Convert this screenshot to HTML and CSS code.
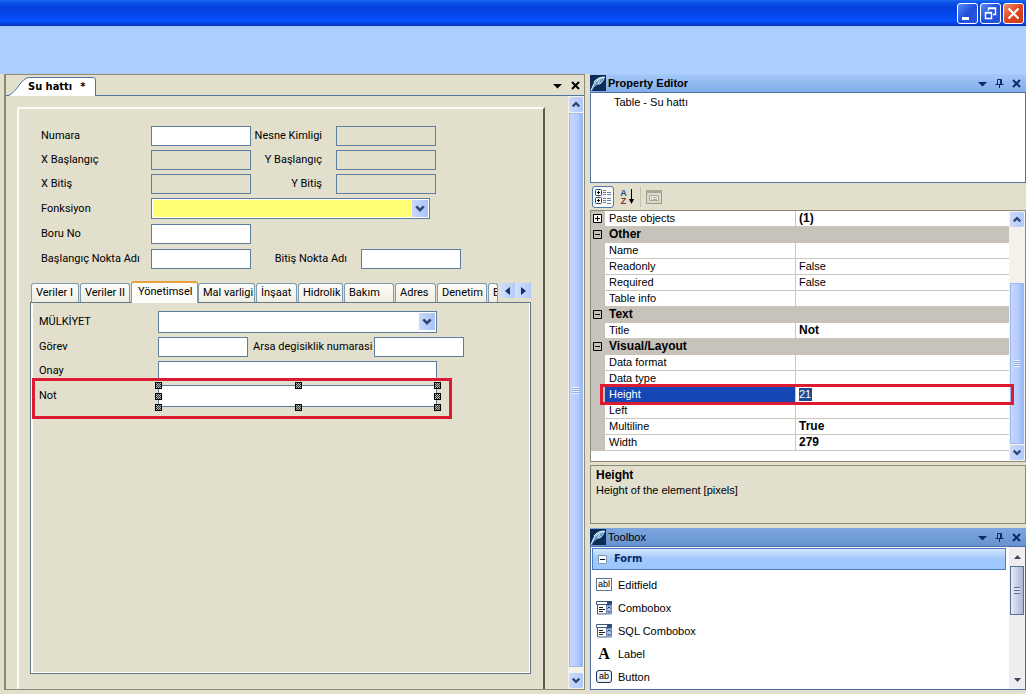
FILE: index.html
```html
<!DOCTYPE html>
<html lang="tr">
<head>
<meta charset="utf-8">
<title>Su hattı</title>
<link rel="stylesheet" href="styles.css">
</head>
<body>
<svg class="defs" aria-hidden="true">
  <symbol id="chev-down" viewBox="0 0 15 15"><path d="M4 5.5 7.500 9 11 5.500" fill="none" stroke="#2f4676" stroke-width="2.400"/></symbol>
  <symbol id="chev-up" viewBox="0 0 15 15"><path d="M4 9.500 7.500 6 11 9.500" fill="none" stroke="#2f4676" stroke-width="2.400"/></symbol>
  <symbol id="drop" viewBox="0 0 9 9"><path d="M0 3h9L4.500 7.500z" fill="currentColor"/></symbol>
  <symbol id="cross" viewBox="0 0 9 9"><path d="M1 1 8 8M8 1 1 8" stroke="currentColor" stroke-width="2" fill="none"/></symbol>
  <symbol id="pin" viewBox="0 0 9 9"><path d="M2.500 5V.5h4V5M5.500 .5V5M.5 5.500h8M4.500 5.500V9" stroke="currentColor" fill="none"/></symbol>
  <symbol id="logo" viewBox="0 0 16 16"><path fill="#0b2a55" d="M0 0h16v16H0z"/><path d="M1 15C3 11 3 6 8 3.500 11 2 13 2 15 1.500 13 4 12 8 8.500 9.500 6 10.500 3.500 12 2 16z" fill="#5f9cc6"/><path d="M1 15.500C3 11 4 8 6 6.500 9 4 12 3 14.500 2 13.500 5 12 8 9.500 9 7.500 9.500 8 7 10 5.500M4 7C6 4 9 2.500 13 2" stroke="#eef8ff" fill="none"/></symbol>
  <symbol id="combo" viewBox="0 0 16 14"><path d="M.5 .5h15v3H.5zM1.500 3.500h9v9.500h-9z" fill="#fff" stroke="#3d5c85"/><path d="M10.500 4.500h5v8.500h-5z" fill="#a9c3ea" stroke="#6884b0"/><path d="M11 0h5v3.500h-5z" fill="#2e4c78"/><path d="M3 6.500h4M3 8.500h6M3 10.500h4" stroke="#222"/><path d="M11.500 7.500 13 6l1.500 1.500M11.500 10 13 11.500 14.500 10" stroke="#12305c" fill="none"/></symbol>
  <symbol id="plus" viewBox="0 0 9 9"><path d="M.5 .5h8v8h-8z" fill="#fff" stroke="#000"/><path d="M2 4.500h5M4.500 2v5" stroke="#000"/></symbol>
  <symbol id="minus" viewBox="0 0 9 9"><path d="M.5 .5h8v8h-8z" fill="none" stroke="#000"/><path d="M2 4.500h5" stroke="#000"/></symbol>
</svg>

<header class="titlebar">
  <button class="win" aria-label="Minimize"><svg viewBox="0 0 19 19"><path d="M4 13h7v3H4z" fill="#fff"/></svg></button>
  <button class="win" aria-label="Restore"><svg viewBox="0 0 19 19"><path d="M7.500 6.500V4h7v6.500H12M7.500 4.500h7" fill="none" stroke="#fff" stroke-width="1.500"/><path d="M4.500 8.500h6v6h-6zM4.500 9h6" fill="none" stroke="#fff" stroke-width="1.500"/></svg></button>
  <button class="win win-close" aria-label="Close"><svg viewBox="0 0 19 19"><path d="M4.500 4.500l10 10M14.500 4.500l-10 10" stroke="#fff" stroke-width="2.200"/></svg></button>
</header>
<div class="ribbon"></div>

<main class="workspace">
  <section class="designer">
    <div class="doc-strip">
      <div class="doc-tab">
        <svg class="doc-tab-shape" viewBox="0 0 88 19" preserveAspectRatio="none"><path d="M0 19C10 14 13 1 21 .5H85.500Q87.500 .5 87.500 3V19" fill="#fff" stroke="#5076a0"/></svg>
        <span>Su hattı</span><span>*</span>
      </div>
      <div class="strip-actions">
        <button class="plain" aria-label="Documents"><svg class="i9"><use href="#drop"/></svg></button>
        <button class="plain" aria-label="Close document"><svg class="i9"><use href="#cross"/></svg></button>
      </div>
    </div>
    <div class="canvas">
      <form class="sheet">
        <div class="fields">
          <div class="row"><label class="l1" for="numara">Numara</label><input class="box" id="numara"><label class="l2" for="nesne">Nesne Kimligi</label><input class="box off" id="nesne" readonly></div>
          <div class="row"><label class="l1" for="xb">X Başlangıç</label><input class="box off" id="xb" readonly><label class="l2" for="yb">Y Başlangıç</label><input class="box off" id="yb" readonly></div>
          <div class="row"><label class="l1" for="xe">X Bitiş</label><input class="box off" id="xe" readonly><label class="l2" for="ye">Y Bitiş</label><input class="box off" id="ye" readonly></div>
          <div class="row"><label class="l1" for="fonk">Fonksiyon</label><span class="combo"><select class="yellow" id="fonk"><option></option></select><svg class="arrow"><use href="#chev-down"/></svg></span></div>
          <div class="row row-gap"><label class="l1" for="boru">Boru No</label><input class="box" id="boru"></div>
          <div class="row row-gap"><label class="l1" for="bna">Başlangıç Nokta Adı</label><input class="box" id="bna"><label class="l2 wide" for="btna">Bitiş Nokta Adı</label><input class="box" id="btna"></div>
        </div>
        <div class="tabs-wrap">
          <div class="tabs" role="tablist">
            <button type="button" role="tab">Veriler I</button><button type="button" role="tab">Veriler II</button><button type="button" role="tab" class="active" aria-selected="true">Yönetimsel</button><button type="button" role="tab">Mal varligi</button><button type="button" role="tab">İnşaat</button><button type="button" role="tab">Hidrolik</button><button type="button" role="tab">Bakım</button><button type="button" role="tab">Adres</button><button type="button" role="tab">Denetim</button><button type="button" role="tab">E</button>
            <div class="spin"><button type="button" aria-label="Previous tabs"><svg viewBox="0 0 5 8"><path d="M5 0v8L0 4z" fill="#12306e"/></svg></button><button type="button" aria-label="Next tabs"><svg viewBox="0 0 5 8"><path d="M0 0v8l5-4z" fill="#12306e"/></svg></button></div>
          </div>
          <div class="page">
            <div class="row"><label class="l3" for="mulk">MÜLKİYET</label><span class="combo"><select id="mulk"><option></option></select><svg class="arrow"><use href="#chev-down"/></svg></span></div>
            <div class="row"><label class="l3" for="gorev">Görev</label><input class="box narrow" id="gorev"><label class="l4" for="arsa">Arsa degisiklik numarasi</label><input class="box narrow" id="arsa"></div>
            <div class="row"><label class="l3" for="onay">Onay</label><input class="box long" id="onay"></div>
            <div class="row marked"><label class="l3" for="not">Not</label><span class="selected"><input class="box long" id="not"><i class="h nw"></i><i class="h n"></i><i class="h ne"></i><i class="h w"></i><i class="h e"></i><i class="h sw"></i><i class="h s"></i><i class="h se"></i></span></div>
          </div>
        </div>
      </form>
      <div class="scroll">
        <button class="sb" aria-label="Scroll up"><svg><use href="#chev-up"/></svg></button>
        <div class="thumb"><i class="grip"></i></div>
        <button class="sb" aria-label="Scroll down"><svg><use href="#chev-down"/></svg></button>
      </div>
    </div>
  </section>

  <aside class="side">
    <div class="panel-head bold">
      <svg class="logo"><use href="#logo"/></svg><h2>Property Editor</h2>
      <button class="plain" aria-label="Menu"><svg class="i9"><use href="#drop"/></svg></button>
      <button class="plain" aria-label="Pin"><svg class="i9"><use href="#pin"/></svg></button>
      <button class="plain" aria-label="Close"><svg class="i9"><use href="#cross"/></svg></button>
    </div>
    <div class="tree">Table - Su hattı</div>
    <div class="toolbar">
      <button class="tool pressed" aria-label="Categorized"><svg viewBox="0 0 16 16"><g fill="#fff" stroke="#1c3f7c"><rect x=".5" y=".5" width="6" height="6" rx="1"/><rect x=".5" y="8.500" width="6" height="6" rx="1"/></g><path d="M2 3.500h3M3.500 2v3M2 11.500h3M3.500 10v3" stroke="#000"/><path d="M8 1.500h3M8 3.500h3M8 5.500h3M8 9.500h3M8 11.500h3M8 13.500h3M12 3.500h4M12 5.500h4M12 9.500h4M12 11.500h4M12 14.500h4" stroke="#6b7aa8"/></svg></button>
      <button class="tool" aria-label="Alphabetical"><span class="az"><b>A</b><b>Z</b></span><svg class="az-arrow" viewBox="0 0 5 15"><path d="M2.500 0v12" stroke="#000"/><path d="M0 10h5L2.500 15z"/></svg></button>
      <i class="sep"></i>
      <button class="tool" aria-label="Property pages" disabled><svg viewBox="0 0 16 16"><path d="M.5 1.500h15v13H.5z" fill="#dedacb" stroke="#9b988b"/><path d="M0 1h16v3H0z" fill="#aaa799"/><path d="M3.500 6.500h9v5h-9z" fill="#f1efe5" stroke="#aaa799"/><path d="M5 8.500h1M7 8.500h4M5 10.500h1M7 10.500h4" stroke="#aaa799"/></svg></button>
    </div>
    <div class="grid-box">
      <div class="grid-view">
        <table class="props">
          <colgroup><col class="c0"><col class="c1"><col></colgroup>
          <tbody>
          <tr><th><svg class="i9"><use href="#plus"/></svg></th><td>Paste objects</td><td><b>(1)</b></td></tr>
          <tr class="cat"><th><svg class="i9"><use href="#minus"/></svg></th><td colspan="2">Other</td></tr>
          <tr><th></th><td>Name</td><td></td></tr>
          <tr><th></th><td>Readonly</td><td>False</td></tr>
          <tr><th></th><td>Required</td><td>False</td></tr>
          <tr><th></th><td>Table info</td><td></td></tr>
          <tr class="cat"><th><svg class="i9"><use href="#minus"/></svg></th><td colspan="2">Text</td></tr>
          <tr><th></th><td>Title</td><td><b>Not</b></td></tr>
          <tr class="cat"><th><svg class="i9"><use href="#minus"/></svg></th><td colspan="2">Visual/Layout</td></tr>
          <tr><th></th><td>Data format</td><td></td></tr>
          <tr><th></th><td>Data type</td><td></td></tr>
          <tr class="current"><th></th><td><label for="height">Height</label></td><td><input class="value" id="height" value="21"></td></tr>
          <tr><th></th><td>Left</td><td></td></tr>
          <tr><th></th><td>Multiline</td><td><b>True</b></td></tr>
          <tr><th></th><td>Width</td><td><b>279</b></td></tr>
          </tbody>
        </table>
      </div>
      <div class="scroll">
        <button class="sb" aria-label="Scroll up"><svg><use href="#chev-up"/></svg></button>
        <div class="thumb low"><i class="grip"></i></div>
        <button class="sb" aria-label="Scroll down"><svg><use href="#chev-down"/></svg></button>
      </div>
    </div>
    <div class="help"><b>Height</b><p>Height of the element [pixels]</p></div>
    <div class="panel-head dim">
      <svg class="logo"><use href="#logo"/></svg><h2>Toolbox</h2>
      <button class="plain" aria-label="Menu"><svg class="i9"><use href="#drop"/></svg></button>
      <button class="plain" aria-label="Pin"><svg class="i9"><use href="#pin"/></svg></button>
      <button class="plain" aria-label="Close"><svg class="i9"><use href="#cross"/></svg></button>
    </div>
    <div class="toolbox">
      <div class="tool-list">
        <button class="group"><svg class="i9" viewBox="0 0 9 9"><path d="M.5 .5h8v8h-8z" fill="#fff" stroke="#7e97bd"/><path d="M2 4.500h5" stroke="#000"/></svg>Form</button>
        <button class="item"><span class="ab">abl</span>Editfield</button>
        <button class="item"><svg><use href="#combo"/></svg>Combobox</button>
        <button class="item"><svg><use href="#combo"/></svg>SQL Combobox</button>
        <button class="item"><span class="big-a">A</span>Label</button>
        <button class="item"><span class="ab round">ab</span>Button</button>
      </div>
      <div class="scroll flat">
        <button class="sb" aria-label="Scroll up"><svg viewBox="0 0 7 4"><path d="M0 4h7L3.500 0z" fill="#3b4660"/></svg></button>
        <div class="thumb"><i class="grip"></i></div>
        <button class="sb" aria-label="Scroll down"><svg viewBox="0 0 7 4"><path d="M0 0h7L3.500 4z" fill="#3b4660"/></svg></button>
      </div>
    </div>
  </aside>
</main>
</body>
</html>
```

FILE: styles.css
```css
*, *::after { box-sizing: border-box; }
body {
  margin: 0;
  min-height: 100vh;
  display: flex;
  flex-direction: column;
  background: #e2dfcd;
  color: #000;
  font: 11px/14px Roboto, "Noto Sans", sans-serif;
}
button, input, select { font: inherit; color: inherit; margin: 0; padding: 0; border-radius: 0; outline: none; }
svg { display: block; }
.defs { position: absolute; width: 0; height: 0; }
.i9 { width: 9px; height: 9px; }
.plain { border: 0; background: none; }

.titlebar {
  height: 26px;
  display: flex;
  justify-content: flex-end;
  align-items: center;
  gap: 2px;
  padding-right: 2px;
  background: linear-gradient(#1a6cf6 0, #0a50e6 3px, #0340dc 8px, #0448ee 16px, #0552fb 21px, #0440dc 24px, #0a2fae 26px);
}
.win {
  width: 21px;
  height: 21px;
  border: 1px solid #fff;
  border-radius: 3px;
  background: linear-gradient(135deg, #5b8cf5, #1f4fdc 50%, #2a56d8);
}
.win svg { width: 19px; height: 19px; }
.win-close { background: linear-gradient(135deg, #f09070, #df4520 50%, #c83c14); }
.ribbon { height: 48px; background: linear-gradient(#a6c8f8 0, #adcfff 3px); }

.workspace {
  flex: 1;
  display: grid;
  grid-template-columns: minmax(0, 581fr) minmax(0, 436fr);
  gap: 5px;
  padding: 0 0 4px 4px;
}

/* form designer */
.designer {
  display: flex;
  flex-direction: column;
  border: 1px solid #8d8a78;
  border-left-width: 2px;
}
.doc-strip {
  height: 21px;
  display: flex;
  align-items: flex-end;
  justify-content: space-between;
  border-bottom: 1px solid #5076a0;
}
.doc-tab {
  position: relative;
  width: 88px;
  height: 19px;
  margin: 0 0 -1px 2px;
  padding-left: 20px;
  display: flex;
  align-items: center;
  gap: 8px;
  font: bold 11px/14px "DejaVu Sans Condensed", "Noto Sans", sans-serif;
}
.doc-tab-shape { position: absolute; inset: 0; width: 100%; height: 100%; }
.doc-tab span { position: relative; }
.strip-actions { display: flex; gap: 9px; padding: 0 4px 5px 0; }
.canvas { flex: 1; display: flex; justify-content: space-between; }
.sheet {
  flex: 1;
  display: flex;
  flex-direction: column;
  margin: 11px 23px 0 11px;
  padding: 17px 12px 15px 11px;
  border-left: 2px solid #fbfaf3;
  border-top: 2px solid #fbfaf3;
  border-right: 2px solid #5d5b4e;
}
.row { display: flex; align-items: center; }
.fields { display: flex; flex-direction: column; gap: 4px; padding-left: 11px; }
.row-gap { padding-top: 1px; }
.l1 { width: 110px; }
.l2 { width: 71px; margin-right: 14px; text-align: right; }
.l2.wide { width: 96px; }
.box { width: 100px; height: 20px; border: 1px solid #5f7d9c; background: #fff; }
.box.off { background: #e2dfcd; }
.narrow { width: 90px; }
.long { width: 279px; }
.combo { position: relative; width: 279px; height: 21px; }
.combo select {
  width: 100%;
  height: 100%;
  appearance: none;
  border: 1px solid #5f7d9c;
  background: #fff;
}
.combo .yellow { background: #ffff73; box-shadow: inset 0 0 0 1px #fff; }
.arrow {
  position: absolute;
  top: 2px;
  right: 2px;
  width: 16px;
  height: 17px;
  background: linear-gradient(90deg, #c8d8fb, #a9c3f5);
  box-shadow: 0 0 0 1px #fff;
  pointer-events: none;
}

.tabs-wrap { flex: 1; display: flex; flex-direction: column; padding-top: 12px; }
.tabs {
  height: 21px;
  display: grid;
  grid-template-columns: 49px 51px 67px 58px 42px 46px 51px 42px 51px 11px 32px;
  align-items: end;
  padding-left: 1px;
}
.tabs > button {
  height: 19px;
  margin-right: 1px;
  border: 1px solid #7f9bb0;
  border-bottom: 0;
  border-radius: 3px 3px 0 0;
  background: linear-gradient(#fdfdfa, #efede2);
  text-align: left;
  padding-left: 4px;
  overflow: hidden;
  white-space: nowrap;
}
.tabs > .active {
  height: 22px;
  margin: 0 0 -1px;
  padding: 0 0 2px 6px;
  border-top: 2px solid #e8a13a;
  background: #fcfcfa;
  z-index: 1;
}
.spin { display: flex; align-self: start; padding-top: 2px; }
.spin button { width: 16px; height: 15px; border: 0; background: linear-gradient(90deg, #d4e0fc, #b4cbf8); display: grid; place-items: center; }
.spin svg { width: 5px; height: 8px; }
.page {
  flex: 1;
  padding: 8px 0 0 6px;
  border: 1px solid #64788a;
  box-shadow: inset 2px 0 #fdfdf8, inset -1px -1px #fff;
  display: flex;
  flex-direction: column;
  gap: 4px;
}
.page .combo { height: 22px; }
.l3 { width: 121px; padding-left: 2px; }
.l4 { width: 126px; padding-left: 5px; white-space: nowrap; }
.marked { position: relative; }
.marked::after {
  content: "";
  position: absolute;
  inset: -7px auto -12px -5px;
  width: 420px;
  border: 3px solid #dc1a32;
  pointer-events: none;
}
.selected { position: relative; z-index: 1; }
.selected .box { display: block; height: 22px; }
.h {
  position: absolute;
  width: 7px;
  height: 7px;
  margin: -3px;
  border: 1px solid #000;
  background: repeating-conic-gradient(#333 0 25%, #bbb 0 50%) 0 0 / 2px 2px;
}
.nw, .n, .ne { top: 0; }
.w, .e { top: 50%; }
.sw, .s, .se { top: 100%; }
.nw, .w, .sw { left: 0; }
.n, .s { left: 50%; }
.ne, .e, .se { left: 100%; }

/* scroll bars */
.scroll { width: 16px; display: flex; flex-direction: column; gap: 1px; padding: 1px; background: #f4f2ea; }
.sb { height: 15px; border: 0; border-radius: 2px; background: linear-gradient(90deg, #cbdafc, #b0c8f8); display: grid; place-items: center; }
.sb svg { width: 14px; height: 15px; }
.thumb {
  flex: 1;
  display: grid;
  place-items: center;
  border: 1px solid #9db9ee;
  background: linear-gradient(90deg, #c6d6fd, #b5ccff 60%, #98b8f4);
}
.thumb.low { margin-top: 55px; }
.grip { width: 6px; height: 7px; background: repeating-linear-gradient(#eef4ff 0 1px, #8ca8dc 1px 2px); }
.canvas .scroll { margin-right: 1px; }
.canvas .sb:last-child { margin-top: 5px; }

/* right column */
.side { display: flex; flex-direction: column; font-family: "Liberation Sans", Arial, sans-serif; }
.panel-head {
  height: 18px;
  display: flex;
  align-items: center;
  gap: 8px;
  padding-right: 5px;
  color: #0c2b6b;
  background: linear-gradient(#a5c8f8, #7facea);
}
.panel-head h2 { flex: 1; margin: 0 0 0 -6px; font: inherit; color: #000; }
.panel-head.bold h2 { font-weight: bold; }
.panel-head.dim { margin-top: 4px; background: linear-gradient(#7ba6e0, #6793d0); }
.logo { width: 16px; height: 16px; }
.tree { height: 91px; padding: 2px 0 0 23px; border: 1px solid #54759f; background: #fff; }
.toolbar { height: 27px; display: flex; align-items: center; gap: 2px; padding-left: 2px; }
.tool { width: 22px; height: 22px; border: 1px solid transparent; border-radius: 3px; background: none; display: flex; align-items: center; justify-content: center; gap: 2px; }
.tool svg { width: 16px; height: 16px; }
.pressed { border-color: #5078a8; background: #fafaf6; }
.az { display: flex; flex-direction: column; font: bold 9px/8px "Liberation Sans", sans-serif; color: #1d4a96; }
.az b + b { color: #963018; }
.tool .az-arrow { width: 5px; height: 15px; }
.sep { width: 1px; height: 20px; background: #c6c2ae; }
.grid-box { height: 252px; display: flex; border: 1px solid #8d8a78; background: #fff; }
.grid-view { flex: 1; }
.props { width: 100%; border-collapse: separate; border-spacing: 0; table-layout: fixed; }
.c0 { width: 14px; }
.c1 { width: 191px; }
.props tr { height: 16px; position: relative; }
.props th { padding: 0 0 1px 2px; background: #c8c3ba; }
.props td { padding: 0 0 0 4px; line-height: 15px; border-bottom: 1px solid #cbc8b9; border-right: 1px solid #cbc8b9; }
.props td:last-child { border-right: 0; padding-left: 3px; }
.props .cat td { background: #c8c3ba; border-color: #c8c3ba; padding-left: 4px; font-weight: bold; font-size: 12px; }
.props b { font-size: 12px; }
.current td:nth-child(2) { background: #1646b4; color: #fff; }
.props .value { width: 13px; height: 13px; border: 0; display: block; background: #1d4a94; color: #fff; }
.current th::after {
  content: "";
  position: absolute;
  inset: -3px -5px -2px 9px;
  border: 3px solid #dc1a32;
  pointer-events: none;
  z-index: 1;
}
.help { height: 59px; margin-top: 3px; padding: 2px 5px; border: 1px solid #8d8a78; }
.help b { font-size: 12px; }
.help p { margin: 1px 0 0; }
.toolbox { flex: 1; display: flex; border: 1px solid #4a6da6; background: #fff; }
.tool-list { flex: 1; padding: 1px 3px 0 1px; }
.tool-list button { width: 100%; border: 0; background: none; display: flex; align-items: center; text-align: left; }
.tool-list .group {
  height: 22px;
  margin-bottom: 3px;
  gap: 7px;
  padding-left: 5px;
  border: 1px solid #4a7cc4;
  background: linear-gradient(#d5e6ff, #a0c8fa 50%, #9cc8ff);
  color: #0a2a6c;
  font: bold 11px/14px "DejaVu Sans Condensed", "Noto Sans", sans-serif;
}
.tool-list .item { height: 23px; padding-left: 4px; gap: 6px; }
.item svg { width: 16px; height: 14px; }
.ab { width: 16px; height: 13px; border: 1px solid #5b7496; font-size: 9px; line-height: 11px; text-align: center; }
.ab.round { border-radius: 3px; border-color: #1c3050; background: #eef2f8; }
.big-a { width: 16px; text-align: center; font: bold 16px/16px "Liberation Serif", serif; }
.flat { background: #efedf0; }
.flat .sb { background: none; height: 17px; }
.flat .sb svg { width: 7px; height: 4px; }
.flat .thumb { flex: none; height: 49px; margin-bottom: auto; border-color: #54709c; background: linear-gradient(90deg, #e6ebf5, #a9b8d2); }
.flat .grip { background: repeating-linear-gradient(#5a6a8a 0 1px, #dde4f0 1px 3px); }
```
